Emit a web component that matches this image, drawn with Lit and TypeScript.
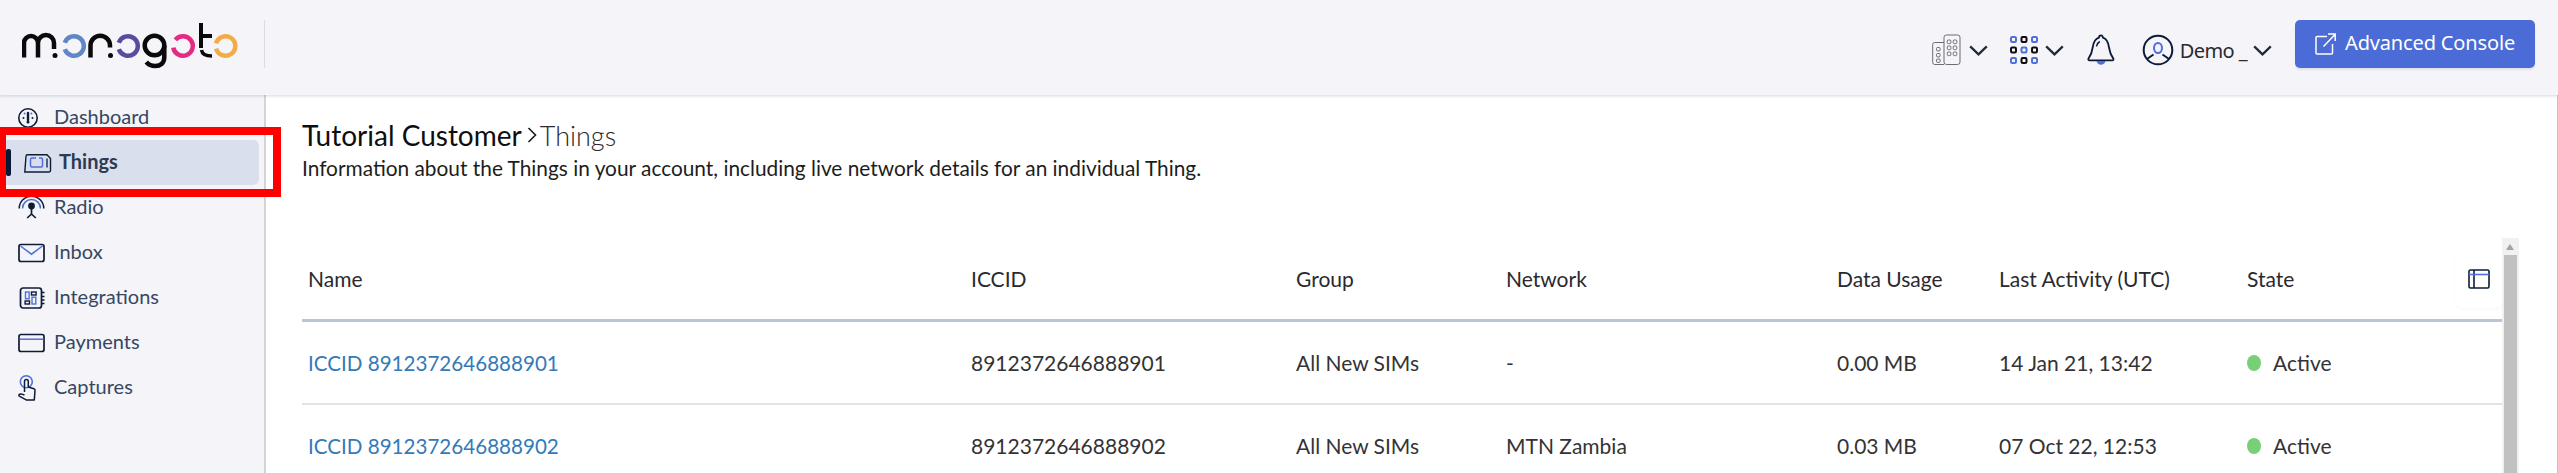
import { LitElement, html, css, svg } from "lit";
import { customElement } from "lit/decorators.js";

const D = "#0d1c36";
const B = "#4f6fdc";
const K = "#0a0a0c";

const navIcons: Record<string, unknown> = {
  Dashboard: svg`<svg class="ni" width="28" height="28" viewBox="0 0 28 28" fill="none"><circle cx="10" cy="14" r="9.200" stroke="${D}" stroke-width="1.600"/><path d="M10 9v7" stroke="${D}" stroke-width="2.400" stroke-linecap="round"/><circle cx="10" cy="18" r="1.500" fill="${D}"/><circle cx="5.500" cy="14" r="1" fill="${D}"/><circle cx="14.500" cy="14" r="1" fill="${D}"/><circle cx="6.600" cy="9.600" r="1" fill="${B}"/><circle cx="13.400" cy="9.600" r="1" fill="${B}"/></svg>`,
  Things: svg`<svg class="ni" width="28" height="28" viewBox="0 0 28 28" fill="none"><path d="M.8 23H25a1.500 1.500 0 0 0 1.500-1.500V9.500L23 5.800H3.500A1.500 1.500 0 0 0 2 7.200L.8 23Z" stroke="${D}" stroke-width="1.400"/><rect x="6.500" y="9" width="12" height="9" rx="1.500" stroke="${B}" stroke-width="1.500"/><path d="M12 9h3" stroke="#d9dfec" stroke-width="2"/><path d="M23 9.500v9" stroke="${D}" stroke-width="1.300"/></svg>`,
  Radio: svg`<svg class="ni" width="28" height="28" viewBox="0 0 28 28" fill="none"><path d="M1.200 14.500a12.300 12.300 0 0 1 24.600 0" stroke="${D}" stroke-width="1.500"/><path d="M4.500 14.500a9 9 0 0 1 18 0" stroke="${B}" stroke-width="1.500"/><circle cx="13.500" cy="12" r="3.400" fill="${D}"/><path d="M13.500 14v6M13.500 20l-4.300 4M13.500 20l4.300 4" stroke="${D}" stroke-width="1.700"/></svg>`,
  Inbox: svg`<svg class="ni" width="28" height="28" viewBox="0 0 28 28" fill="none"><rect x="1" y="5.500" width="25" height="17" rx="2" stroke="${D}" stroke-width="1.700"/><path d="M2.500 7l11 8.200L24.500 7" stroke="${B}" stroke-width="1.500"/></svg>`,
  Integrations: svg`<svg class="ni" width="28" height="28" viewBox="0 0 28 28" fill="none"><rect x="2.500" y="4" width="21" height="20" rx="2.500" stroke="${D}" stroke-width="1.700"/><rect x="7.500" y="8" width="3.600" height="6.800" stroke="${B}" stroke-width="1.400"/><rect x="13.500" y="8" width="4.600" height="3" stroke="${D}" stroke-width="1.400"/><rect x="7.100" y="17" width="4.400" height="3" stroke="${D}" stroke-width="1.400"/><rect x="14" y="13.200" width="3.800" height="6.800" stroke="${B}" stroke-width="1.400"/><path d="M23.500 8.500h3M23.500 12.500h3M23.500 16h3M23.500 19.500h3" stroke="${D}" stroke-width="1.600"/></svg>`,
  Payments: svg`<svg class="ni" width="28" height="28" viewBox="0 0 28 28" fill="none"><rect x="1" y="5.500" width="25" height="17" rx="2" stroke="${D}" stroke-width="1.700"/><path d="M1.500 10.200h24" stroke="${B}" stroke-width="1.500"/></svg>`,
  Captures: svg`<svg class="ni" width="28" height="28" viewBox="0 0 28 28" fill="none"><circle cx="8.300" cy="7.700" r="6" stroke="${B}" stroke-width="1.600"/><path d="M6.500 18V7.500a1.900 1.900 0 0 1 3.800 0V13l5.600 1.800a1.600 1.600 0 0 1 1.100 1.700l-.7 9.400H8.200L1.300 22.200c-.7-.5-.5-1.700.4-2l1.200-.3L6.500 21" stroke="${D}" stroke-width="1.500" stroke-linejoin="round"/></svg>`,
};

// A ring that opens on one side: `gap` degrees either side of `mid`, measured from +x, clockwise on screen.
function ring(cx: number, cy: number, mid: number, gap: number, color: string) {
  const r = 9.8;
  const p = (deg: number) => {
    const a = (deg * Math.PI) / 180;
    return `${(cx + r * Math.cos(a)).toFixed(2)} ${(cy + r * Math.sin(a)).toFixed(2)}`;
  };
  return svg`<path d="M${p(mid + gap)}A${r} ${r} 0 1 1 ${p(mid - gap)}" stroke="${color}"/>`;
}

const logo = svg`<svg class="logo" width="216" height="46" viewBox="22 23 216 46" fill="none" stroke-width="4.500">
  <path d="M24 57.500V43a7 7 0 0 1 14 0V57.500M38 43a7.500 7.500 0 0 1 16 0V49" stroke="${K}"/>
  <circle cx="55" cy="55.500" r="2.500" fill="${K}" stroke="none"/>
  ${ring(74, 46, 180, 20, "#5f86c6")}
  <path d="M90.500 57.500V45.500a9.500 9.500 0 0 1 19.500 0V47.500" stroke="${K}"/>
  <circle cx="110.500" cy="55.500" r="2.500" fill="${K}" stroke="none"/>
  ${ring(128, 46, 180, 20, "#5b4ba0")}
  <circle cx="154.500" cy="45.500" r="9.800" stroke="${K}"/>
  <path d="M164.300 45.500V57c0 6.500-4.300 9-9 9c-3.800 0-6.800-1.300-9-4" stroke="${K}"/>
  ${ring(183, 46, 195, 24, "#e62a82")}
  <path d="M201 23V48M201 36H212" stroke="${K}" stroke-width="4"/>
  <path d="M201.500 50c.5 3.500 4 6 10.500 6" stroke="${K}" stroke-width="3.500"/>
  ${ring(225.500, 46, 180, 16, "#f2ab45")}
</svg>`;

const chevron = svg`<svg class="chev" width="19" height="11" viewBox="0 0 19 11" fill="none"><path d="M1.200 1.400L9.500 9.400l8.300-8" stroke="#222a38" stroke-width="2.300"/></svg>`;

const building = svg`<svg width="29" height="32" viewBox="0 0 29 32" fill="none" stroke="#6b6d72" stroke-width="1"><path d="M12 8.500H2.500A2 2 0 0 0 .7 10.500v18a2 2 0 0 0 2 2H12"/><rect x="12" y="1" width="16" height="29.500" rx="2.400"/>${[[4.5,13.5],[4.5,19.5],[4.5,25]].map(([x,y])=>svg`<rect x="${x}" y="${y}" width="3.600" height="3.400" rx="1"/>`)}${[6,12,18].flatMap(y=>[15.3,21.2].map(x=>svg`<rect x="${x}" y="${y}" width="3.600" height="3.600" rx="1.100"/>`))}</svg>`;

const grid = svg`<svg width="28" height="28" viewBox="0 0 28 28" fill="none" stroke-width="2">${[0,1,2].flatMap(r=>[0,1,2].map(c=>svg`<rect x="${1+c*10.5}" y="${1+r*10.5}" width="5" height="5" rx="1.200" stroke="${(r+c)%2===0 ? B : "#0b0b10"}"/>`))}</svg>`;

const bell = svg`<svg width="28" height="32" viewBox="0 0 28 32" fill="none"><path d="M14 1.300c-1.400 0-2 1.400-2 2.400C7.700 5 6.500 8.400 5.800 13c-.6 4.200-1.700 8-4.300 11.600-.5.800 0 1.800 1 1.800h22.800c1 0 1.500-1 1-1.800C23.700 21 22.500 17 21.900 13c-.7-4.600-1.900-8-6-9.300 0-1-.5-2.400-1.900-2.400Z" stroke="${D}" stroke-width="1.800" stroke-linejoin="round"/><path d="M9.500 12.500c.4-2.500 1.400-4 3.300-5" stroke="${D}" stroke-width="1.500"/><path d="M9.500 27c.7 2.500 2.400 3.800 4.500 3.800s3.800-1.300 4.500-3.800Z" fill="${B}"/></svg>`;

const avatar = svg`<svg width="32" height="32" viewBox="0 0 32 32" fill="none"><circle cx="16" cy="16" r="14.300" stroke="${D}" stroke-width="2"/><ellipse cx="16" cy="14" rx="4" ry="5" stroke="${B}" stroke-width="2"/><path d="M5 25l6.500-4.500M27 25l-6.500-4.500" stroke="${D}" stroke-width="2"/></svg>`;

const external = svg`<svg width="21" height="22" viewBox="0 0 21 22" fill="none" stroke="#fff" stroke-width="1.500"><path d="M12 3.500H2a1 1 0 0 0-1 1V20a1 1 0 0 0 1 1h14.500a1 1 0 0 0 1-1v-9"/><path d="M8.500 13.500L20 1.500M13 1h7.200v7"/></svg>`;

const colIcon = svg`<svg width="22" height="20" viewBox="0 0 22 20" fill="none"><rect x="1" y="1" width="20" height="18" rx="1.500" stroke="${D}" stroke-width="1.600"/><path d="M6 1v18" stroke="${D}" stroke-width="1.600"/><path d="M1 5.500h20" stroke="${B}" stroke-width="1.600"/></svg>`;

const NAV = ["Dashboard", "Things", "Radio", "Inbox", "Integrations", "Payments", "Captures"];
const COLS = ["Name", "ICCID", "Group", "Network", "Data Usage", "Last Activity (UTC)", "State"];
const ROWS = [
  { name: "ICCID 8912372646888901", iccid: "8912372646888901", group: "All New SIMs", net: "-", usage: "0.00 MB", last: "14 Jan 21, 13:42", state: "Active" },
  { name: "ICCID 8912372646888902", iccid: "8912372646888902", group: "All New SIMs", net: "MTN Zambia", usage: "0.03 MB", last: "07 Oct 22, 12:53", state: "Active" },
];

@customElement("app-root")
export class AppRoot extends LitElement {
  static styles = css`
    :host { display: block; width: 2558px; height: 473px; overflow: hidden; position: relative; background: #fff; font-family: Lato, "Liberation Sans", sans-serif; color: #222; }
    .top { height: 95px; background: #f4f4f9; box-shadow: 0 1px 3px rgba(40,40,60,.18); display: flex; align-items: center; position: relative; z-index: 1; box-sizing: border-box; }
    .brand { width: 265px; height: 48px; margin-top: -7px; border-right: 1px solid #dcdce4; display: flex; align-items: center; padding-left: 22px; box-sizing: border-box; }
    .logo { display: block; margin-top: 3px; }
    .tools { margin-left: auto; display: flex; align-items: center; padding-right: 23px; }
    .tool { display: flex; align-items: center; }
    .tool.bld { margin-top: 5px; gap: 8px; margin-right: 22px; }
    .tool.grd { margin-top: 5px; gap: 7px; margin-right: 23px; }
    .tool.bel { margin-top: 5px; margin-right: 27px; }
    .tool.usr { margin-top: 5px; margin-right: 23px; font: 400 20px "Noto Sans", sans-serif; color: #2a2a2e; }
    .tool.usr .who { margin-left: 6px; margin-right: 6px; white-space: pre; letter-spacing: -.6px; }
    .chev { margin-top: 1px; }
    .adv { display: flex; align-items: center; gap: 9px; width: 240px; height: 48px; margin-top: -7px; box-sizing: border-box; padding-left: 20px; background: #4b6bd6; color: #fff; border-radius: 5px; box-shadow: 0 2px 2px rgba(60,60,90,.1); font: 400 20px "Noto Sans", sans-serif; letter-spacing: -.15px; white-space: nowrap; }
    .adv span { margin-top: -3px; }
    .body { display: flex; height: 378px; }
    .side { width: 266px; flex: none; background: #f4f4f9; border-right: 2px solid #d4d4d8; box-sizing: border-box; }
    .item { height: 45px; display: flex; align-items: center; padding-left: 18px; font-size: 20px; color: #37475f; }
    .item span { margin-top: -3px; }
    .item .ni { margin-right: 8px; flex: none; overflow: visible; display: block; }
    .item.on { margin-left: 6px; width: 253px; background: #d9dfec; border-radius: 0 6px 6px 0; font-weight: 700; color: #2d3a52; position: relative; box-sizing: border-box; padding-left: 18px; }
    .item.on .ni { margin-right: 7px; }
    .item.on::before { content: ""; position: absolute; left: 0; top: 9px; width: 5px; height: 27px; background: #0b1736; border-radius: 2px; }
    .main { flex: 1; min-width: 0; padding: 24px 38px 0 36px; border-right: 1px solid #c4c4c8; box-sizing: border-box; }
    .crumb { display: flex; align-items: center; height: 32px; font-size: 28px; color: #0e0e10; white-space: nowrap; }
    .crumb .sep { margin: 0 3px 0 5px; display: block; }
    .crumb .here { font-size: 27px; font-weight: 300; color: #2a2a2e; }
    .desc { margin-top: 5px; height: 24px; line-height: 24px; font-size: 20.85px; color: #1d1d20; white-space: nowrap; }
    .wrap { display: flex; margin-top: 58px; }
    .table { flex: 1; min-width: 0; }
    .row { display: grid; grid-template-columns: 663px 325px 210px 331px 162px 248px 222px 1fr; align-items: center; height: 81px; font-size: 21px; color: #333336; box-sizing: content-box; }
    .row.body-row { border-bottom: 2px solid #e2e2ea; }
    .row.head { border-bottom: 3px solid #bcc5d6; color: #2a2a2e; }
    .cell { padding-left: 6px; white-space: nowrap; }
    a.name { color: #337ab7; text-decoration: none; font-size: 20.6px; }
    .active { display: flex; align-items: center; gap: 12px; }
    .dot { width: 14px; height: 16px; background: #77cf77; border-radius: 50%; flex: none; }
    .colbtn { margin-left: -8px; width: 48px; height: 58px; margin-bottom: -20px; margin-top: -20px; display: flex; justify-content: center; align-items: center; border-radius: 0 0 8px 8px; box-shadow: 0 2px 3px rgba(60,60,90,.03); }
    .scroll { width: 17px; flex: none; background: #f1f1f1; height: 240px; padding: 17px 2px 0; box-sizing: border-box; position: relative; }
    .scroll::before { content: ""; position: absolute; left: 4px; top: 6px; border: 4.5px solid transparent; border-top: 0; border-bottom: 6px solid #a3a3a3; }
    .thumb { height: 100%; background: #c1c1c1; }
    .mark { position: absolute; left: 0; top: 127px; width: 281px; height: 70px; box-sizing: border-box; border: solid #ff0000; border-width: 8px; border-left-width: 6px; z-index: 2; pointer-events: none; }
  `;

  render() {
    return html`
      <div class="top">
        <div class="brand">${logo}</div>
        <div class="tools">
          <div class="tool bld">${building}${chevron}</div>
          <div class="tool grd">${grid}${chevron}</div>
          <div class="tool bel">${bell}</div>
          <div class="tool usr">${avatar}<span class="who">Demo _</span>${chevron}</div>
          <div class="adv">${external}<span>Advanced Console</span></div>
        </div>
      </div>
      <div class="body">
        <nav class="side">
          ${NAV.map((n) => html`<div class="item ${n === "Things" ? "on" : ""}">${navIcons[n]}<span>${n}</span></div>`)}
        </nav>
        <main class="main">
          <div class="crumb"><span>Tutorial Customer</span><svg class="sep" width="10" height="18" viewBox="0 0 10 18" fill="none"><path d="M1.500 2l7 7-7 7" stroke="#1a1a1c" stroke-width="1.600"/></svg><span class="here">Things</span></div>
          <div class="desc">Information about the Things in your account, including live network details for an individual Thing.</div>
          <div class="wrap">
            <div class="table">
              <div class="row head">
                ${COLS.map((c) => html`<div class="cell">${c}</div>`)}
                <div class="colbtn">${colIcon}</div>
              </div>
              ${ROWS.map((r) => html`
                <div class="row body-row">
                  <div class="cell"><a class="name">${r.name}</a></div>
                  <div class="cell">${r.iccid}</div>
                  <div class="cell">${r.group}</div>
                  <div class="cell">${r.net}</div>
                  <div class="cell">${r.usage}</div>
                  <div class="cell">${r.last}</div>
                  <div class="cell active"><span class="dot"></span>${r.state}</div>
                  <div></div>
                </div>`)}
            </div>
            <div class="scroll"><div class="thumb"></div></div>
          </div>
        </main>
      </div>
      <div class="mark"></div>
    `;
  }
}
